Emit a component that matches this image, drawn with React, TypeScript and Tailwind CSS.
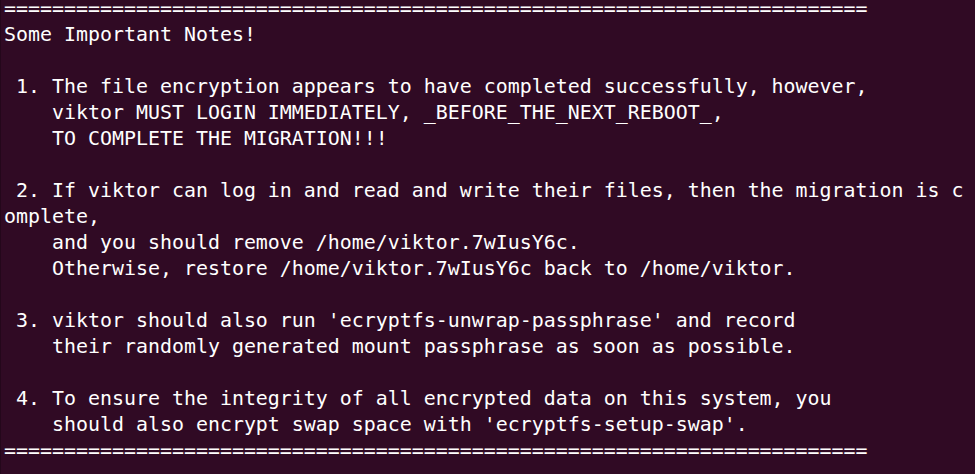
import React from "react";

const rule = "=".repeat(72);

const lines: string[] = [
  "Some Important Notes!",
  "",
  " 1. The file encryption appears to have completed successfully, however,",
  "    viktor MUST LOGIN IMMEDIATELY, _BEFORE_THE_NEXT_REBOOT_,",
  "    TO COMPLETE THE MIGRATION!!!",
  "",
  " 2. If viktor can log in and read and write their files, then the migration is c",
  "omplete,",
  "    and you should remove /home/viktor.7wIusY6c.",
  "    Otherwise, restore /home/viktor.7wIusY6c back to /home/viktor.",
  "",
  " 3. viktor should also run 'ecryptfs-unwrap-passphrase' and record",
  "    their randomly generated mount passphrase as soon as possible.",
  "",
  " 4. To ensure the integrity of all encrypted data on this system, you",
  "    should also encrypt swap space with 'ecryptfs-setup-swap'.",
  rule,
];

export default function App() {
  return (
    <div className="w-[975px] h-[474px] overflow-hidden bg-[#300a24] border-l border-[#24071b]">
      <div className="pl-[3px] text-[#ffffff] text-[19.93px] leading-[26px] font-['DejaVu_Sans_Mono','Liberation_Mono',monospace]">
        {/* first row sits partly scrolled off the top */}
        <div className="h-[22px] leading-[18px] whitespace-pre">{rule}</div>
        {lines.map((line, i) => (
          <div key={i} className="h-[26px] whitespace-pre">
            {line}
          </div>
        ))}
      </div>
    </div>
  );
}
